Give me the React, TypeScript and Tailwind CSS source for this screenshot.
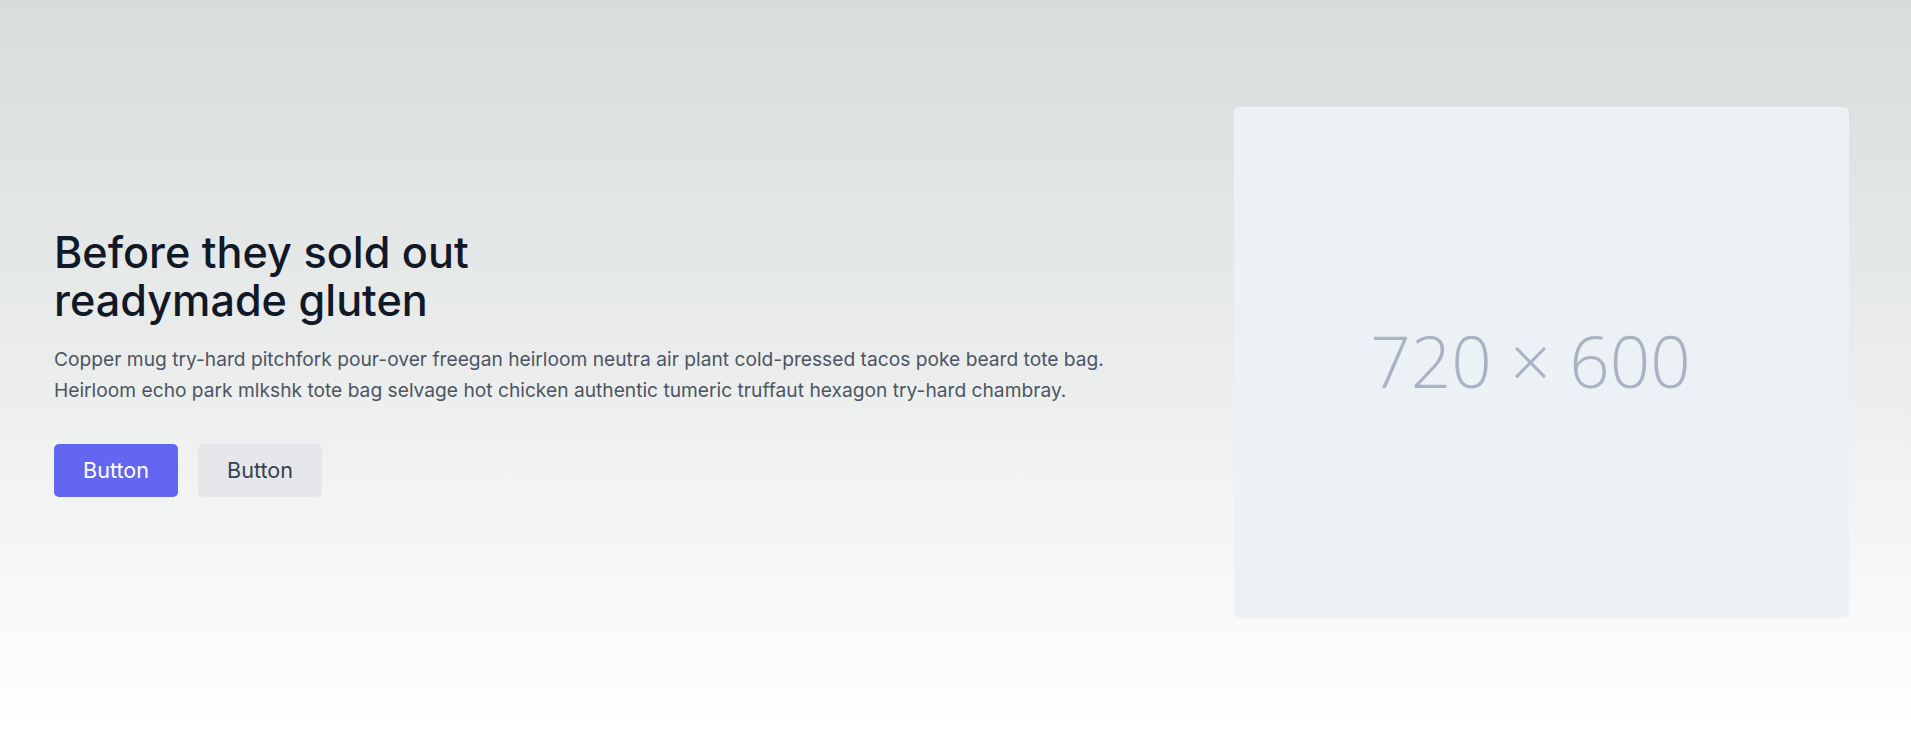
export default function App() {
  return (
    <div
      className="w-full h-[734px] bg-gradient-to-b from-[#d8dcdc] to-[#ffffff] overflow-hidden"
      style={{ fontFamily: "Inter, 'Noto Sans', sans-serif" }}
    >
      <div className="flex items-start pt-[107px] pl-[54px] pr-[62px]">
        <div className="flex-1 flex flex-col items-start pr-[115px] mt-[121px]">
          <h1 className="text-[43.2px] leading-[48px] font-medium text-[#111827] mb-[20px]">
            Before they sold out
            <br />
            readymade gluten
          </h1>
          <p className="text-[19.2px] leading-[31.2px] text-[#4b5563] mb-[38px]">
            Copper mug try-hard pitchfork pour-over freegan heirloom neutra air plant cold-pressed tacos poke beard tote bag. Heirloom echo park mlkshk tote bag selvage hot chicken authentic tumeric truffaut hexagon try-hard chambray.
          </p>
          <div className="flex gap-[20px]">
            <button className="h-[53px] px-[29px] rounded-[5px] bg-[#6366f1] text-white text-[21.6px] leading-[33.6px]">
              Button
            </button>
            <button className="h-[53px] px-[29px] rounded-[5px] bg-[#e5e7eb] text-[#374151] text-[21.6px] leading-[33.6px]">
              Button
            </button>
          </div>
        </div>
        <div className="w-[615px] h-[511px] shrink-0 rounded-[5px] bg-[#ecf1f6] flex items-center justify-center">
          <span
            className="text-[71px] font-light text-[#a8b3c3] -mt-[2px] mr-[22px]"
            style={{ fontFamily: "'Open Sans', 'Noto Sans', sans-serif" }}
          >
            720 × 600
          </span>
        </div>
      </div>
    </div>
  );
}
